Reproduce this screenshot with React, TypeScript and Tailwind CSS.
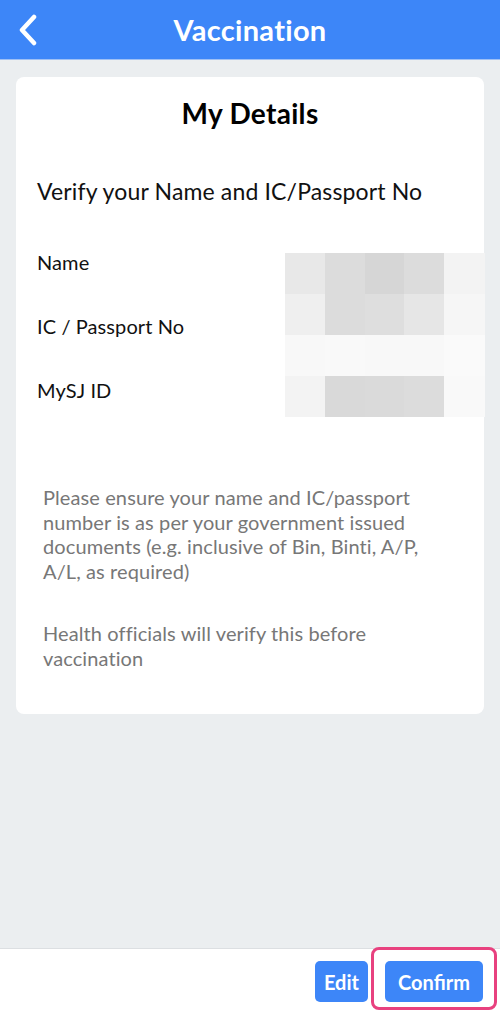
import React from 'react';

const MOSAIC = [
  ['#e8e8e8', '#dcdcdc', '#d6d6d6', '#dcdcdc', '#f3f3f3'],
  ['#efefef', '#dcdcdc', '#dedede', '#e6e6e6', '#f6f6f6'],
  ['#f8f8f8', '#f9f9f9', '#f8f8f8', '#f8f8f8', '#fafafa'],
  ['#f3f3f3', '#d9d9d9', '#dadada', '#dcdcdc', '#f9f9f9'],
];

function Mosaic() {
  return (
    <div className="absolute left-[269px] top-[176px] grid grid-cols-5">
      {MOSAIC.flat().map((c, i) => (
        <div key={i} className="w-[41px] h-[41px]" style={{ backgroundColor: c }} />
      ))}
    </div>
  );
}

export default function App() {
  const rows = ['Name', 'IC / Passport No', 'MySJ ID'];

  return (
    <div className="w-[500px] h-[1014px] flex flex-col bg-[#ebeef0] font-['Lato','Noto_Sans',sans-serif] overflow-hidden">
      {/* Header */}
      <div className="h-[60px] shrink-0 bg-[#3d86f8] relative flex items-center justify-center border-b border-[#9fc0f5]">
        <button className="absolute left-[16px] top-[13px] w-[24px] h-[34px] flex items-center justify-center">
          <svg width="22" height="32" viewBox="0 0 22 32" fill="none">
            <path d="M17 3 L5 16 L17 29" stroke="white" strokeWidth="4.5" strokeLinecap="round" strokeLinejoin="round" />
          </svg>
        </button>
        <h1 className="text-white text-[29px] font-bold tracking-[0.3px]">Vaccination</h1>
      </div>

      {/* Body */}
      <div className="flex-1 px-4 pt-[17px]">
        <div className="relative bg-white rounded-[8px] h-[637px] px-[21px] pt-[18px]">
          <h2 className="text-center text-[28px] font-bold text-black leading-[36px] tracking-[0.3px]">My Details</h2>
          <p className="mt-[45px] text-[23px] text-[#111] leading-[30px] tracking-[0.15px]">Verify your Name and IC/Passport No</p>

          <div className="mt-[43px] flex flex-col gap-[37px]">
            {rows.map((r) => (
              <div key={r} className="text-[20px] text-[#111] leading-[27px] tracking-[0.1px]">{r}</div>
            ))}
          </div>

          <div className="mt-[81px] px-[6px] w-[406px] text-[20px] text-[#777] leading-[24.7px] tracking-[0.1px]">
            <p>Please ensure your name and IC/passport number is as per your government issued documents (e.g. inclusive of Bin, Binti, A/P, A/L, as required)</p>
            <p className="mt-[37px]">Health officials will verify this before vaccination</p>
          </div>

          <Mosaic />
        </div>
      </div>

      {/* Footer */}
      <div className="h-[66px] shrink-0 bg-white border-t border-[#dcdfe2] flex items-center justify-end pr-[17px] gap-[17px]">
        <button className="h-[41px] w-[53px] rounded-[5px] bg-[#3d86f8] text-white text-[20px] font-bold">Edit</button>
        <div className="relative">
          <button className="h-[41px] w-[98px] rounded-[5px] bg-[#3d86f8] text-white text-[20px] font-bold">Confirm</button>
          <div className="absolute -left-[14px] -top-[14px] w-[126px] h-[63px] rounded-[8px] border-[3px] border-[#e8417f] pointer-events-none" />
        </div>
      </div>
    </div>
  );
}
